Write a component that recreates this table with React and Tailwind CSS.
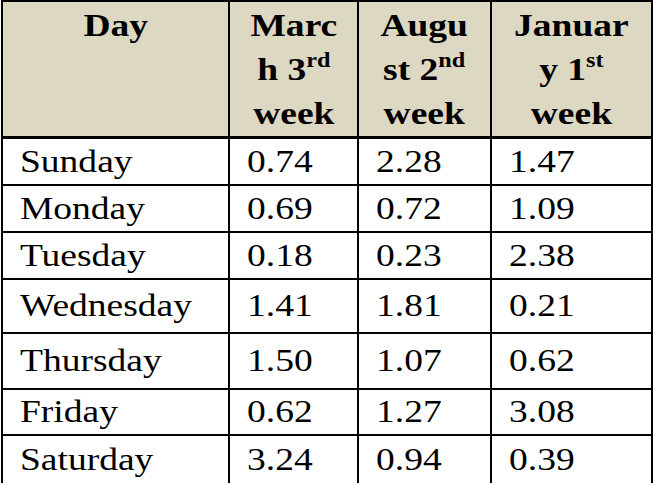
import React from 'react';

const rows = [
    { day: 'Sunday', march: '0.74', august: '2.28', january: '1.47', h: 'h-[47px]' },
    { day: 'Monday', march: '0.69', august: '0.72', january: '1.09', h: 'h-[47px]' },
    { day: 'Tuesday', march: '0.18', august: '0.23', january: '2.38', h: 'h-[47px]' },
    { day: 'Wednesday', march: '1.41', august: '1.81', january: '0.21', h: 'h-[54px]' },
    { day: 'Thursday', march: '1.50', august: '1.07', january: '0.62', h: 'h-[56px]' },
    { day: 'Friday', march: '0.62', august: '1.27', january: '3.08', h: 'h-[46px]' },
    { day: 'Saturday', march: '3.24', august: '0.94', january: '0.39', h: 'h-[49px]' },
];

// the source table is stretched sideways, so glyphs get a horizontal scale
function Stretch({ children, center }) {
    return (
        <span className={`inline-block scale-x-[1.21] ${center ? 'origin-center' : 'origin-left'}`}>
            {children}
        </span>
    );
}

function HeadCell({ children }) {
    return (
        <th className="border-2 border-black border-b-[3px] align-top pt-[2px] text-center font-bold text-[31px] leading-[44px]">
            <Stretch center>{children}</Stretch>
        </th>
    );
}

function Cell({ children }) {
    return (
        <td className="border-2 border-black align-middle pl-[17px] text-left text-[31px] leading-none">
            <Stretch>{children}</Stretch>
        </td>
    );
}

export default function App() {
    return (
        <div className="w-[653px] h-[483px] bg-white overflow-hidden font-['Liberation_Serif','Times_New_Roman',serif] text-black">
            <table className="ml-px w-[650px] table-fixed border-collapse">
                <colgroup>
                    <col className="w-[227px]" />
                    <col className="w-[129px]" />
                    <col className="w-[133px]" />
                    <col className="w-[161px]" />
                </colgroup>
                <thead>
                    <tr className="h-[136px] bg-[#ddd8c2]">
                        <HeadCell>Day</HeadCell>
                        <HeadCell>
                            Marc<br />h 3<sup className="text-[20px] -top-[13px]">rd</sup><br />week
                        </HeadCell>
                        <HeadCell>
                            Augu<br />st 2<sup className="text-[20px] -top-[13px]">nd</sup><br />week
                        </HeadCell>
                        <HeadCell>
                            Januar<br />y 1<sup className="text-[20px] -top-[13px]">st</sup><br />week
                        </HeadCell>
                    </tr>
                </thead>
                <tbody>
                    {rows.map((r) => (
                        <tr key={r.day} className={r.h}>
                            <Cell>{r.day}</Cell>
                            <Cell>{r.march}</Cell>
                            <Cell>{r.august}</Cell>
                            <Cell>{r.january}</Cell>
                        </tr>
                    ))}
                </tbody>
            </table>
        </div>
    );
}
